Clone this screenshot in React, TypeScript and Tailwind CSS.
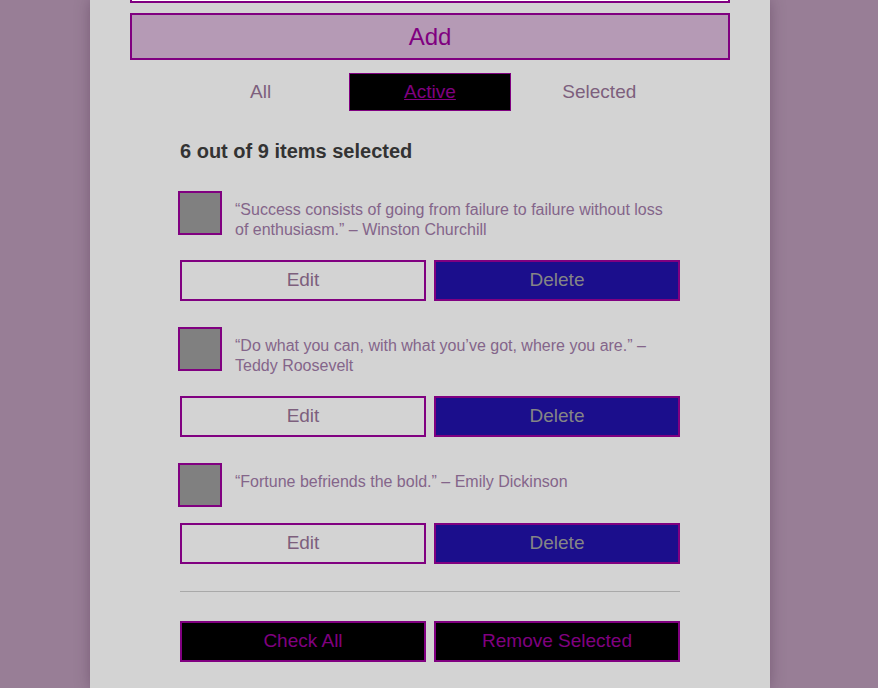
import { useState } from 'react'

type Quote = { id: number; text: string; checked: boolean }

const QUOTES: Quote[] = [
  { id: 1, text: '“Success consists of going from failure to failure without loss of enthusiasm.” – Winston Churchill', checked: false },
  { id: 2, text: '“Do what you can, with what you’ve got, where you are.” – Teddy Roosevelt', checked: false },
  { id: 3, text: '“Fortune befriends the bold.” – Emily Dickinson', checked: false },
]

const TABS = ['All', 'Active', 'Selected']

export default function App() {
  const [tab, setTab] = useState('Active')
  const [items] = useState(QUOTES)

  return (
    <div className="h-[688px] overflow-hidden bg-[#987e96] flex font-['Liberation_Sans',Arial,sans-serif]">
      <div className="ml-[90px] w-[680px] bg-[#d3d3d3] px-10 shadow-[0_0_14px_rgba(60,30,60,0.35)]">
        {/* tail of the input, page is scrolled */}
        <div className="h-[3px] bg-white border-x-2 border-b-2 border-[#800080]" />

        <button className="mt-[10px] w-full h-[47px] bg-[#b59ab5] border-2 border-[#800080] text-[24px] text-[#800080]">
          Add
        </button>

        <div className="mt-[13px] mx-[50px] grid grid-cols-3 gap-2">
          {TABS.map(t => (
            <button
              key={t}
              onClick={() => setTab(t)}
              className={
                t === tab
                  ? 'h-[38px] bg-black border border-[#800080] text-[19px] text-[#800080] underline'
                  : 'h-[38px] text-[19px] text-[#7d5f7d]'
              }
            >
              {t}
            </button>
          ))}
        </div>

        <div className="mx-[50px]">
          <h2 className="mt-[28px] text-[20px] leading-6 font-bold text-[#333]">6 out of 9 items selected</h2>

          <ul className="mt-[28px]">
            {items.map(item => (
              <li key={item.id} className="mb-[26px]">
                <div className="flex min-h-[60px]">
                  <div className="-ml-[2px] w-[44px] h-[44px] shrink-0 bg-[#808080] border-2 border-[#800080]" />
                  <p className="ml-[13px] pt-[9px] pb-[20px] pr-[12px] text-[16px] leading-5 text-[#84658a]">{item.text}</p>
                </div>
                <div className="grid grid-cols-2 gap-2">
                  <button className="h-[41px] border-2 border-[#800080] text-[19px] text-[#7d5f7d]">Edit</button>
                  <button className="h-[41px] bg-[#1b0e8c] border-2 border-[#800080] text-[19px] text-[#858585]">Delete</button>
                </div>
              </li>
            ))}
          </ul>

          <hr className="mt-[27px] border-t border-[#a9a9a9]" />

          <div className="mt-[29px] grid grid-cols-2 gap-2">
            <button className="h-[41px] bg-black border-2 border-[#800080] text-[19px] text-[#800080]">Check All</button>
            <button className="h-[41px] bg-black border-2 border-[#800080] text-[19px] text-[#800080]">Remove Selected</button>
          </div>
        </div>
      </div>
    </div>
  )
}
